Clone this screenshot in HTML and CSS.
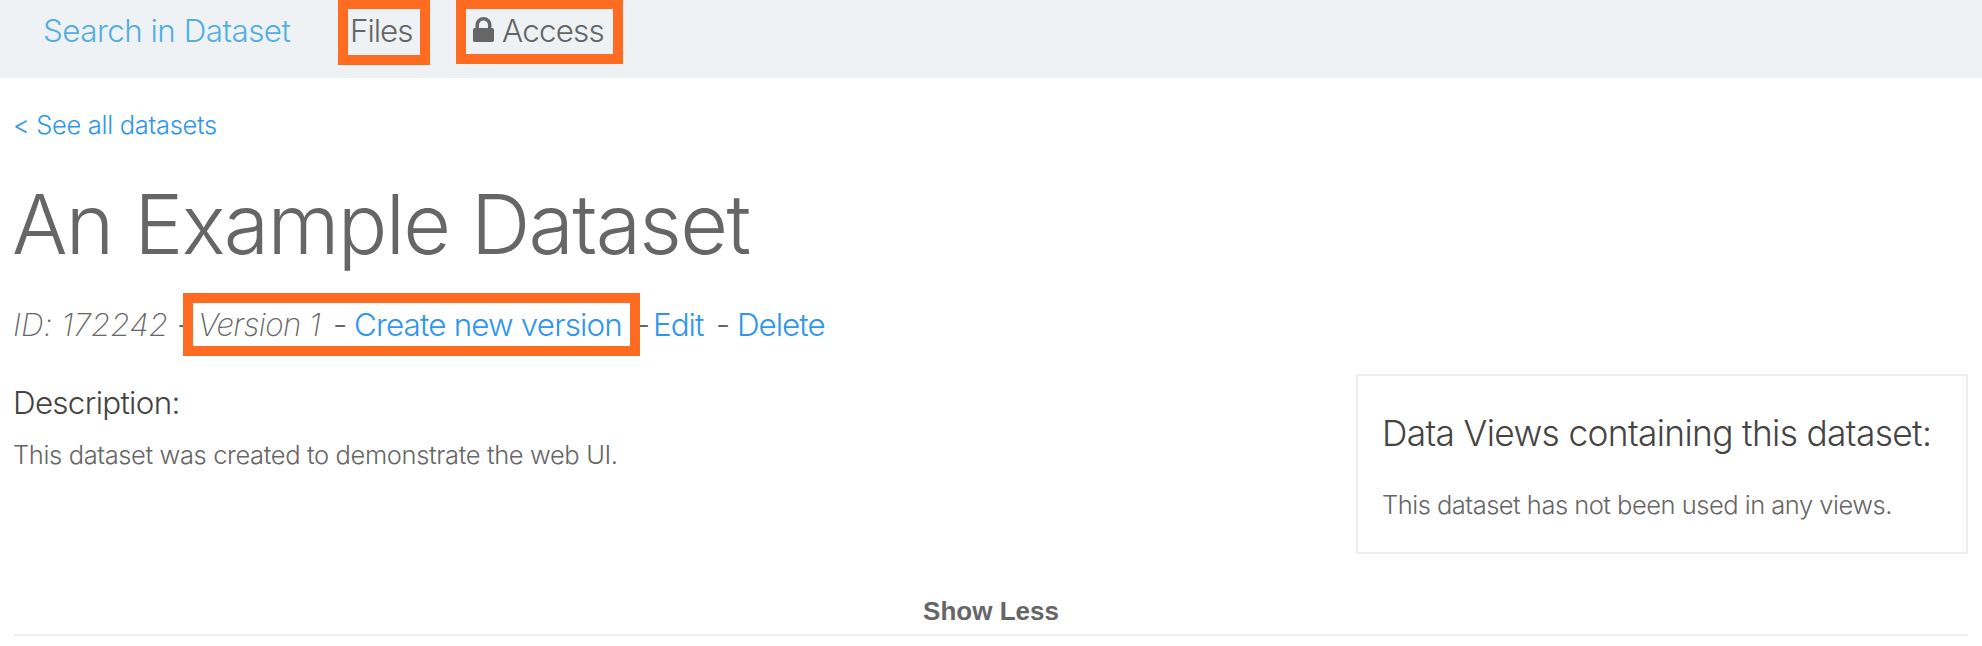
FILE: index.html
```html
<!DOCTYPE html>
<html lang="en">
<head>
<meta charset="utf-8">
<title>An Example Dataset</title>
<link rel="stylesheet" href="styles.css">
</head>
<body>
<nav class="tabs">
  <a class="tab tab-search">Search in Dataset</a>
  <a class="tab tab-files"><span>Files</span></a>
  <a class="tab tab-access">
    <svg class="lock" viewBox="0 0 21 25" width="21" height="25"><path fill="currentColor" fill-rule="evenodd" d="M2.500 11V8a8 8 0 0 1 16 0v3h.7q1.800 0 1.800 1.800V23.200q0 1.800-1.800 1.800H1.800Q0 25 0 23.200V12.800Q0 11 1.800 11ZM6 11h9V8a4.500 4.500 0 0 0-9 0Z"/></svg>
    <span>Access</span>
  </a>
</nav>
<main class="page">
  <a class="back">&lt; See all datasets</a>
  <h1 class="title">An Example Dataset</h1>
  <div class="meta">
    <em class="id">ID: 172242</em><span class="dash dash-first">-</span>
    <span class="highlight"><em class="version">Version 1</em><span class="dash">-</span><a class="create">Create new version</a></span>
    <span class="dash dash-tight">-</span><a class="edit">Edit</a><span class="dash">-</span><a class="delete">Delete</a>
  </div>
  <div class="columns">
    <section class="description">
      <h2 class="subhead">Description:</h2>
      <p class="copy">This dataset was created to demonstrate the web UI.</p>
    </section>
    <aside class="views">
      <h2 class="views-head">Data Views containing this dataset:</h2>
      <p class="views-copy">This dataset has not been used in any views.</p>
    </aside>
  </div>
  <div class="toggle">Show Less</div>
</main>
</body>
</html>
```
FILE: styles.css
```css
*, *::after { box-sizing: border-box; }
body {
  margin: 0;
  background: #fff;
  color: #666;
  font-family: Inter, "Liberation Sans", sans-serif;
  font-weight: 300;
}
h1, h2, p { margin: 0; font-weight: 300; }
.tabs {
  display: flex;
  align-items: flex-start;
  height: 78px;
  background: #eef2f5;
  font-size: 31.4px;
  letter-spacing: -1px;
  white-space: nowrap;
}
.tab-search { width: 338px; padding-left: 43px; line-height: 63px; letter-spacing: -.52px; color: #55aee0; }
.tab-files, .tab-access { border: 10px solid #ff6b21; border-top-width: 9px; line-height: 45px; }
.tab-files { width: 92px; height: 65px; padding-left: 2px; }
.tab-access { display: flex; gap: 8px; width: 167px; height: 64px; margin-left: 26px; padding-left: 7px; letter-spacing: -.8px; }
.lock { flex: none; margin-top: 8px; }
.page { padding: 0 14px; }
.back { display: block; margin-left: -1px; padding-top: 27px; font-size: 25.5px; line-height: 40px; letter-spacing: -.3px; color: #2d96ee; }
.title { margin: 24px 0 0 -2px; font-size: 82.5px; line-height: 111px; letter-spacing: -1.680px; }
.meta {
  display: flex;
  height: 63px;
  margin-top: 14px;
  align-items: flex-start;
  font-size: 31.4px;
  line-height: 63px;
  letter-spacing: -1px;
  white-space: nowrap;
}
.meta a { color: #2d96ee; }
.meta em { font-weight: 200; }
.id { width: 164px; margin-left: -1px; letter-spacing: .1px; }
.dash { width: 21px; }
.dash-first { width: 23px; }
.dash-tight { width: 17px; }
.highlight { position: relative; display: flex; width: 436px; }
.highlight::after {
  content: "";
  position: absolute;
  z-index: 1;
  left: -17px;
  top: -1px;
  width: 457px;
  height: 63px;
  border: 10px solid #ff6b21;
}
.version { width: 135px; margin-left: -2px; letter-spacing: -.6px; }
.create { letter-spacing: -.83px; }
.edit { width: 63px; }
.columns { display: flex; justify-content: space-between; margin-top: 17px; }
.subhead { margin: 8px 0 0 -1px; font-size: 31.4px; line-height: 42px; letter-spacing: -.7px; color: #444; }
.copy { margin: 12px 0 0 -1px; font-size: 25.5px; line-height: 38px; letter-spacing: -.37px; }
.views { width: 612px; height: 180px; padding: 37px 24px 0; border: 2px solid #eee; white-space: nowrap; }
.views-head { font-size: 35.3px; line-height: 42px; letter-spacing: -.65px; color: #444; }
.views-copy { font-size: 25.5px; margin-top: 31px; line-height: 38px; letter-spacing: -.5px; }
.toggle {
  height: 82px;
  padding-top: 37px;
  border-bottom: 2px solid #eee;
  font: bold 26px/40px "Liberation Sans", sans-serif;
  text-align: center;
}
```
